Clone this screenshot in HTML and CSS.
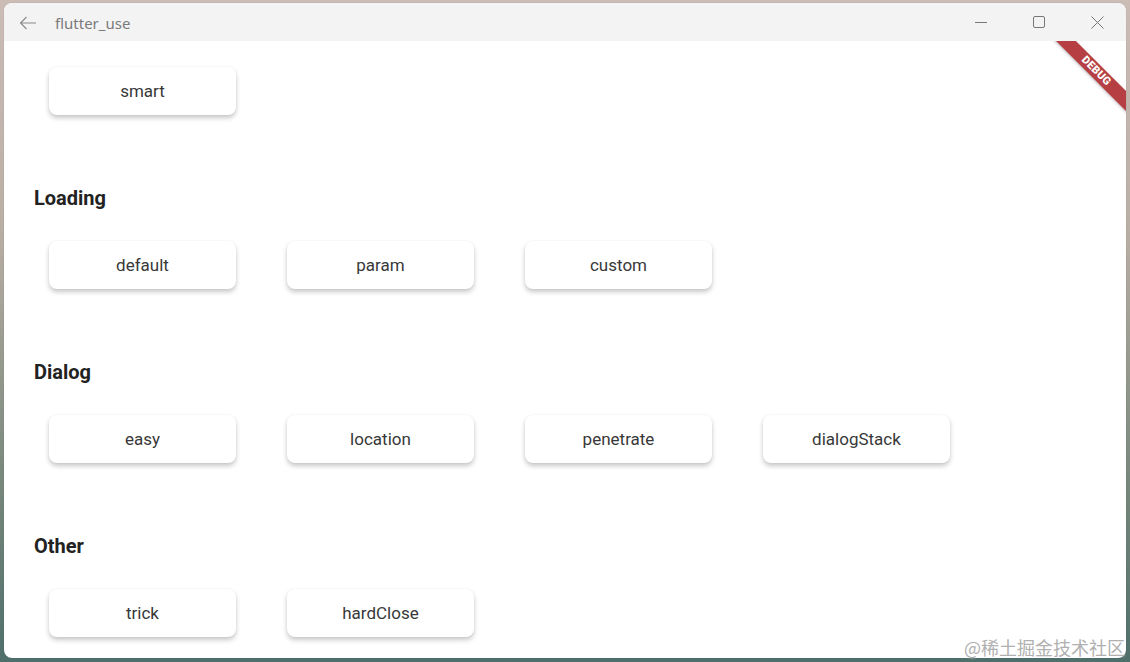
FILE: index.html
```html
<!DOCTYPE html>
<html>
<head>
<meta charset="utf-8">
<link rel="stylesheet" href="styles.css">
</head>
<body>
<div class="window">
  <div class="titlebar">
    <div class="tb-left">
      <svg class="back" width="18" height="14" viewBox="0 0 18 14"><path d="M17 7H1.5M7.5 1L1.5 7l6 6" fill="none" stroke="#8a8a8a" stroke-width="1.1"/></svg>
      <span class="title">flutter_use</span>
    </div>
    <div class="controls">
      <span class="ctl"><svg width="12" height="12" viewBox="0 0 12 12"><path d="M0 6.5h12" stroke="#777" stroke-width="1"/></svg></span>
      <span class="ctl"><svg width="12" height="12" viewBox="0 0 12 12"><rect x="0.5" y="0.5" width="11" height="11" rx="1.5" fill="none" stroke="#777" stroke-width="1"/></svg></span>
      <span class="ctl"><svg width="13" height="13" viewBox="0 0 13 13"><path d="M0.5 0.5l12 12M12.5 0.5l-12 12" stroke="#777" stroke-width="1"/></svg></span>
    </div>
  </div>
  <div class="content">
    <div class="row first">
      <div class="btn">smart</div>
    </div>
    <h2 class="heading">Loading</h2>
    <div class="row">
      <div class="btn">default</div>
      <div class="btn">param</div>
      <div class="btn">custom</div>
    </div>
    <h2 class="heading">Dialog</h2>
    <div class="row">
      <div class="btn">easy</div>
      <div class="btn">location</div>
      <div class="btn">penetrate</div>
      <div class="btn">dialogStack</div>
    </div>
    <h2 class="heading">Other</h2>
    <div class="row">
      <div class="btn">trick</div>
      <div class="btn">hardClose</div>
    </div>
    <div class="debug">DEBUG</div>
  </div>
</div>
<div class="watermark">@稀土掘金技术社区</div>
</body>
</html>
```

FILE: styles.css
```css
html, body {
  margin: 0;
  padding: 0;
}
body {
  width: 1130px;
  height: 662px;
  overflow: hidden;
  box-sizing: border-box;
  padding: 3px 4px 4px 4px;
  background: linear-gradient(180deg, #cbbcb6 0%, #b9aea4 35%, #7c8a7e 70%, #4f6f6b 100%);
  position: relative;
}
.window {
  height: 655px;
  border-radius: 8px;
  overflow: hidden;
  display: flex;
  flex-direction: column;
  background: #fff;
  box-shadow: 0 0 1px rgba(0,0,0,0.3);
}
.titlebar {
  height: 38px;
  flex: none;
  background: #f3f3f3;
  display: flex;
  align-items: center;
  justify-content: space-between;
}
.tb-left {
  display: flex;
  align-items: center;
}
.back {
  margin-left: 15px;
  margin-top: 1px;
}
.title {
  margin-left: 18px;
  font-family: "Noto Sans", sans-serif;
  font-size: 15px;
  color: #7a7a7a;
  margin-top: 1px;
}
.controls {
  display: flex;
  align-items: center;
}
.ctl {
  width: 58px;
  height: 38px;
  display: flex;
  align-items: center;
  justify-content: center;
}
.content {
  flex: 1;
  position: relative;
  overflow: hidden;
  padding: 26px 0 0 30px;
  font-family: Roboto, sans-serif;
}
.row {
  display: flex;
  gap: 51px;
  padding-left: 15px;
  margin-bottom: 71px;
}
.btn {
  width: 187px;
  height: 48px;
  box-sizing: border-box;
  background: #fff;
  border-radius: 8px;
  box-shadow: 0 3px 5px rgba(0,0,0,0.22), 0 0 2px rgba(0,0,0,0.05);
  display: flex;
  align-items: center;
  justify-content: center;
  font-size: 17px;
  color: #383838;
}
.heading {
  margin: 0 0 31px 0;
  height: 24px;
  line-height: 24px;
  font-size: 20px;
  font-weight: 700;
  color: #222;
}
.debug {
  position: absolute;
  top: 23px;
  right: -22px;
  width: 104px;
  height: 14px;
  line-height: 14px;
  transform: rotate(45deg);
  background: #b53f42;
  color: #fff;
  font-family: Roboto, sans-serif;
  font-weight: 900;
  font-size: 11px;
  text-align: center;
  letter-spacing: 0.3px;
  box-shadow: 0 1px 3px rgba(0,0,0,0.25);
}
.watermark {
  position: absolute;
  right: 5px;
  bottom: 5px;
  font-family: "Noto Sans CJK SC", sans-serif;
  font-size: 18px;
  line-height: 20px;
  color: #b0b0b0;
  text-shadow: 0 0 2px #fff;
}
```
